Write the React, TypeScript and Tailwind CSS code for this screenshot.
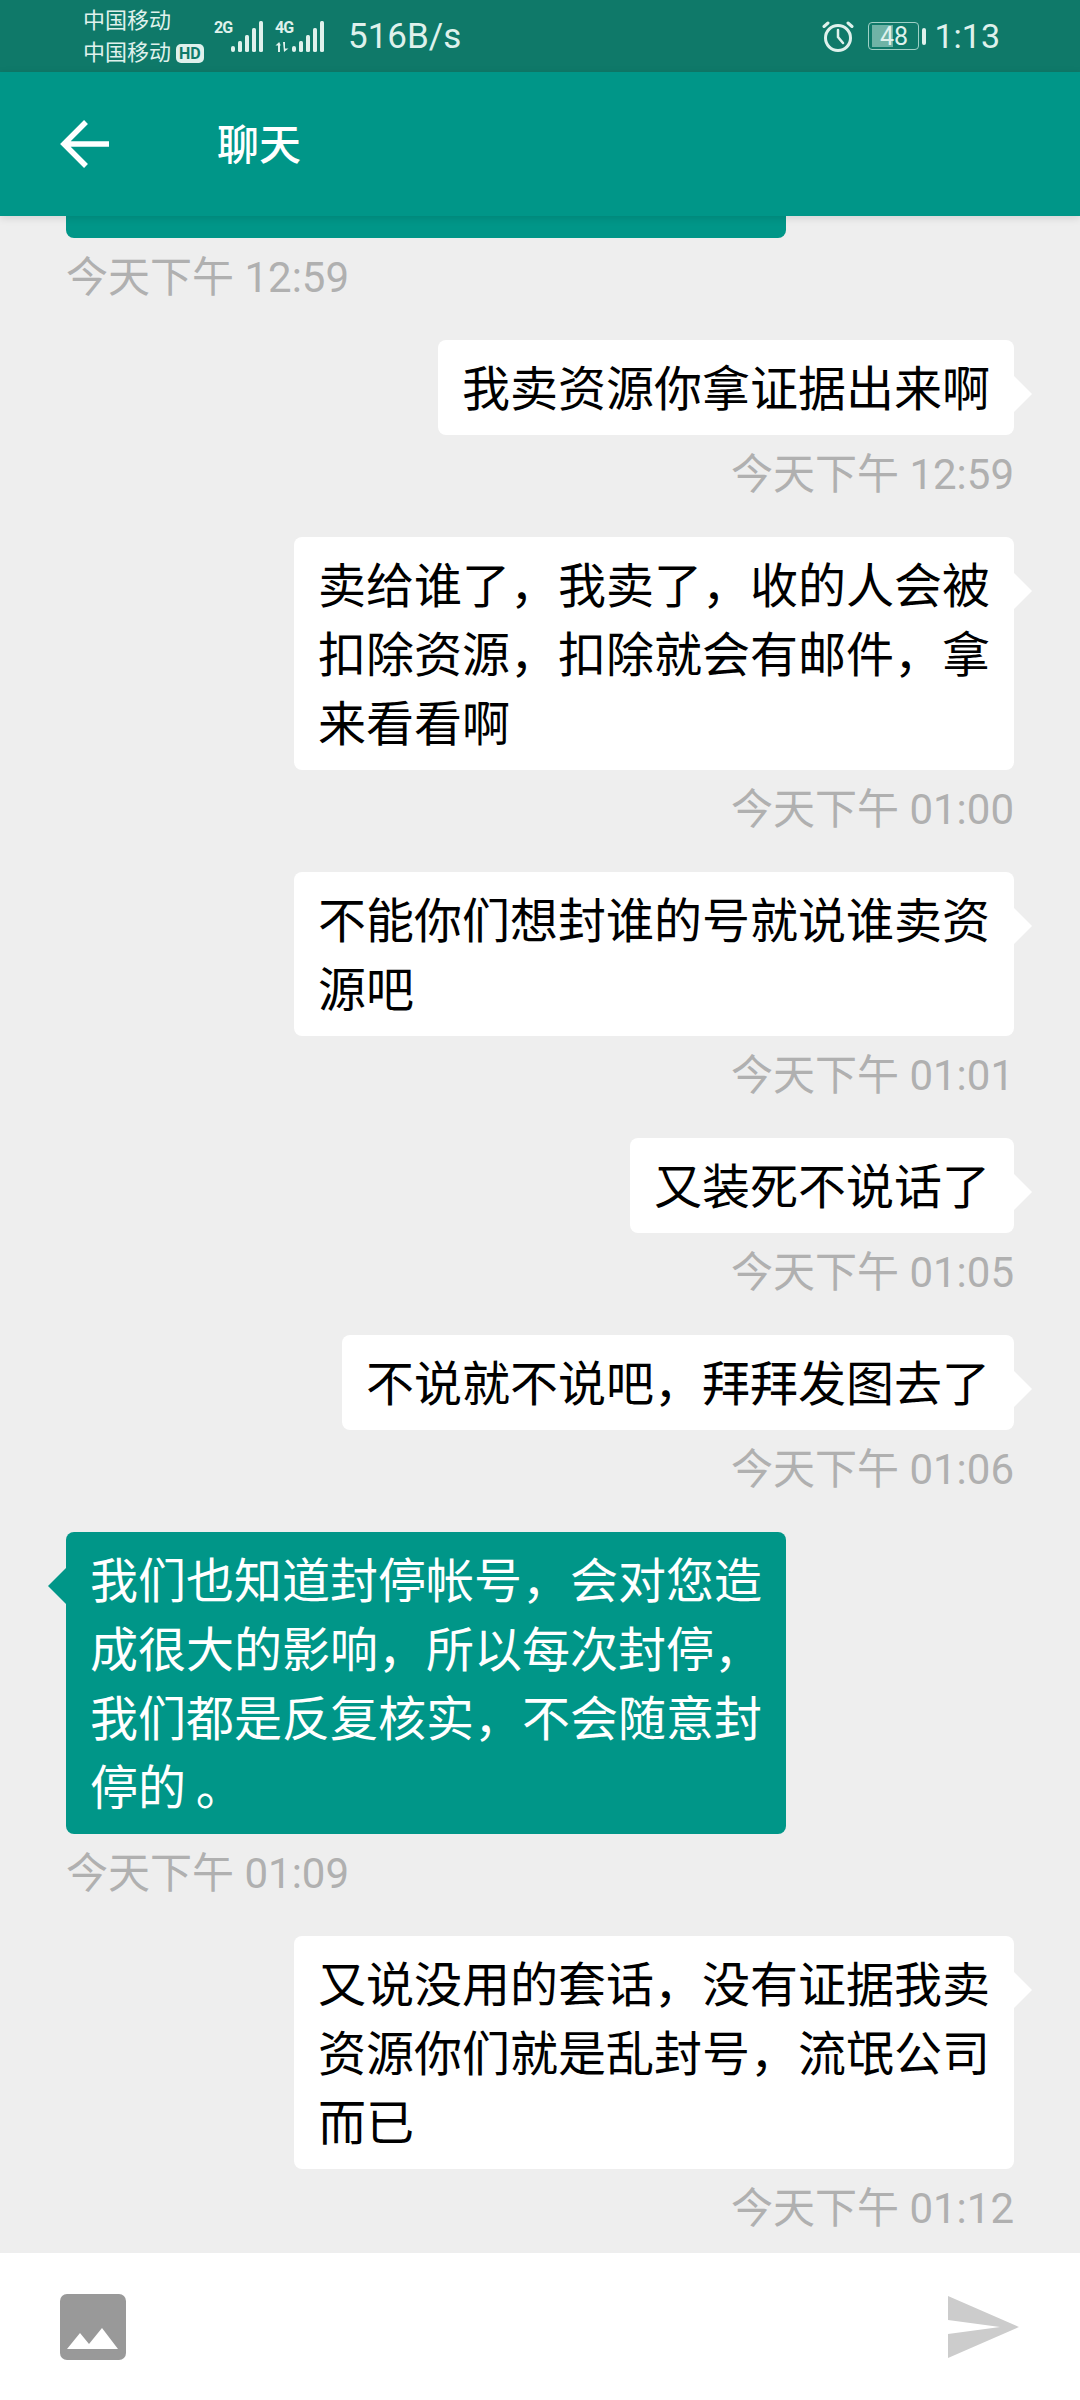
const cjk = "font-['Roboto','Noto_Sans_CJK_SC',sans-serif]";

type Msg = { side: 'left' | 'right'; lines: string[]; time: string };

const messages: Msg[] = [
  { side: 'right', lines: ['我卖资源你拿证据出来啊'], time: '今天下午 12:59' },
  { side: 'right', lines: ['卖给谁了，我卖了，收的人会被', '扣除资源，扣除就会有邮件，拿', '来看看啊'], time: '今天下午 01:00' },
  { side: 'right', lines: ['不能你们想封谁的号就说谁卖资', '源吧'], time: '今天下午 01:01' },
  { side: 'right', lines: ['又装死不说话了'], time: '今天下午 01:05' },
  { side: 'right', lines: ['不说就不说吧，拜拜发图去了'], time: '今天下午 01:06' },
  { side: 'left', lines: ['我们也知道封停帐号，会对您造', '成很大的影响，所以每次封停，', '我们都是反复核实，不会随意封', '停的\u2009。'], time: '今天下午 01:09' },
  { side: 'right', lines: ['又说没用的套话，没有证据我卖', '资源你们就是乱封号，流氓公司', '而已'], time: '今天下午 01:12' },
];

const SignalBars = () => (
  <svg width="32" height="31" viewBox="0 0 32 31" fill="#dff1ec">
    <rect x="0" y="25" width="4" height="6" rx="2" />
    <rect x="7" y="20" width="4" height="11" rx="1.5" />
    <rect x="14" y="14" width="4" height="17" rx="1.5" />
    <rect x="21" y="7" width="4" height="24" rx="1.5" />
    <rect x="28" y="0" width="4" height="31" rx="1.5" />
  </svg>
);

const DataArrows = () => (
  <svg className="absolute top-[21px] left-0" width="17" height="10" viewBox="0 0 17 10" fill="#dff1ec">
    <path d="M3 10V3.5H0.5L4.2 0l1.6 3.5H5V10z" />
    <path d="M8 0h2v6.5h3.5L9 10z" />
  </svg>
);

const StatusBar = () => (
  <div className="flex h-[72px] items-center bg-[#0f7969] text-[#dff1ec]">
    <div className="ml-[83px] flex w-[120px] shrink-0 flex-col pt-[2px] text-[22px] leading-[32px] whitespace-nowrap">
      <span>中国移动</span>
      <div className="flex items-center gap-[5px]">
        <span>中国移动</span>
        <span className="rounded-[5px] bg-[#dff1ec] px-[3px] text-[16px] leading-[19px] font-bold text-[#0f7969]">HD</span>
      </div>
    </div>
    <div className="ml-[11px] flex h-[31px] items-start">
      <span className="w-[17px] text-[16px] leading-[14px] font-bold tracking-[-1px]">2G</span>
      <SignalBars />
    </div>
    <div className="relative ml-[12px] flex h-[31px] items-start">
      <span className="w-[17px] text-[16px] leading-[14px] font-bold tracking-[-1px]">4G</span>
      <DataArrows />
      <SignalBars />
    </div>
    <span className="ml-[24px] text-[35px] leading-none">516B/s</span>
    <div className="ml-auto flex items-center">
      <svg width="32" height="32" viewBox="0 0 32 32" fill="none" stroke="#dff1ec" strokeWidth="3" strokeLinecap="round">
        <circle cx="16" cy="18" r="12.5" />
        <path d="M16 10v7l5 6" strokeWidth="2.5" />
        <path d="M2 6.5l4-3.5M30 6.5l-4-3.5" />
      </svg>
      <div className="relative ml-[14px] flex h-[28px] w-[51px] items-center justify-center rounded-[4px] border-[1.5px] border-[#9fd0c6] text-[25px] leading-none">
        <div className="absolute top-[2px] bottom-[2px] left-[3px] w-[21px] bg-[#6fb3a6]" />
        <span className="relative">48</span>
      </div>
      <div className="ml-[3px] h-[17px] w-[4px] rounded-[2px] bg-[#dff1ec]" />
      <span className="mr-[80px] ml-[8px] text-[34px] leading-none">1:13</span>
    </div>
  </div>
);

const Header = () => (
  <div className="relative z-10 flex h-[144px] items-center bg-[#009688] shadow-[0_2px_8px_rgba(0,0,0,0.12)]">
    <svg className="ml-[60px]" width="49" height="48" viewBox="0 0 49 48" fill="none" stroke="#ffffff" strokeWidth="5.5">
      <path d="M49 24H4M26 2L4 24l22 22" />
    </svg>
    <span className="mt-[3px] ml-[108px] text-[42px] leading-none font-medium text-white">聊天</span>
  </div>
);

const Bubble = ({ msg }: { msg: Msg }) => {
  const left = msg.side === 'left';
  return (
    <div className={left ? 'flex flex-col items-start pl-[66px]' : 'flex flex-col items-end pr-[66px]'}>
      <div
        className={
          left
            ? 'relative rounded-[8px] bg-[#009688] px-[24px] pt-[15px] pb-[11px] text-[48px] leading-[69px] whitespace-nowrap text-white'
            : 'relative rounded-[8px] bg-white px-[24px] pt-[15px] pb-[11px] text-[48px] leading-[69px] whitespace-nowrap text-black'
        }
      >
        {left ? (
          <div className="absolute top-[36px] left-[-18px] h-0 w-0 border-y-[18px] border-r-[18px] border-y-transparent border-r-[#009688]" />
        ) : (
          <div className="absolute top-[36px] right-[-18px] h-0 w-0 border-y-[18px] border-l-[18px] border-y-transparent border-l-white" />
        )}
        {msg.lines.map((line) => (
          <div key={line}>{line}</div>
        ))}
      </div>
      <span className="mt-[12px] text-[42px] leading-[56px] text-[#b0b0b0]">{msg.time}</span>
    </div>
  );
};

export default function App() {
  return (
    <div className={`flex h-[2400px] w-[1080px] flex-col overflow-hidden bg-[#eeeeee] ${cjk}`}>
      <StatusBar />
      <Header />
      <div className="flex min-h-0 flex-1 flex-col gap-[34px] overflow-hidden">
        <div className="flex flex-col items-start pl-[66px]">
          <div className="h-[22px] w-[720px] rounded-b-[8px] bg-[#009688]" />
          <span className="mt-[12px] text-[42px] leading-[56px] text-[#b0b0b0]">今天下午 12:59</span>
        </div>
        {messages.map((m) => (
          <Bubble key={m.time} msg={m} />
        ))}
      </div>
      <div className="flex h-[147px] shrink-0 items-center justify-between bg-white pr-[61px] pl-[60px]">
        <svg width="66" height="66" viewBox="0 0 66 66">
          <rect width="66" height="66" rx="7" fill="#999999" />
          <path d="M7 55L20 39l9 11 13-16 16 21z" fill="#ffffff" />
        </svg>
        <svg width="71" height="62" viewBox="0 0 71 62" fill="#cccccc">
          <path d="M0 0l71 31L0 62V38l52-7L0 24z" />
        </svg>
      </div>
    </div>
  );
}
